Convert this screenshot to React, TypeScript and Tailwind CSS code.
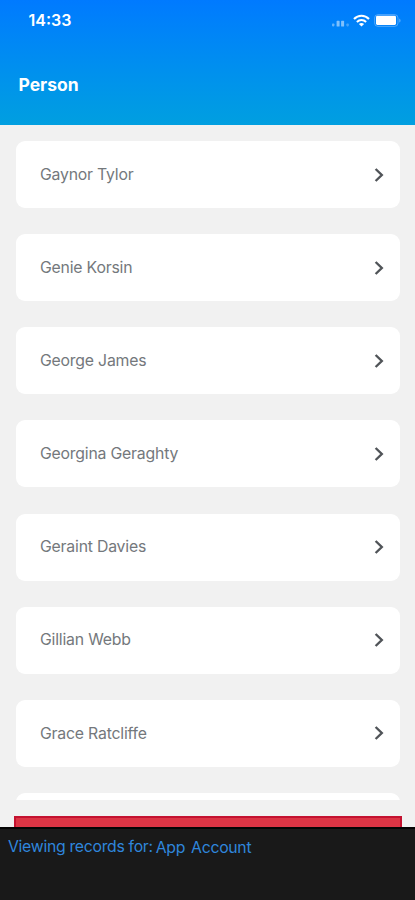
import React from "react";

interface PersonCardProps {
    name: string;
}

const people = [
    "Gaynor Tylor",
    "Genie Korsin",
    "George James",
    "Georgina Geraghty",
    "Geraint Davies",
    "Gillian Webb",
    "Grace Ratcliffe",
];

const StatusIcons: React.FC = () => {
    return (
        <div className="flex items-center">
            <svg className="mt-[5px]" width="18" height="10" viewBox="0 0 18 10" fill="white">
                <rect x="0" y="5.4" width="2.4" height="3" rx="0.8" opacity="0.4" />
                <rect x="4.6" y="2.8" width="3" height="5.8" rx="0.6" opacity="0.5" />
                <rect x="9.1" y="2.8" width="3" height="5.8" rx="0.6" opacity="0.5" />
                <rect x="14.4" y="5.4" width="2.4" height="3" rx="0.8" opacity="0.28" />
            </svg>
            <svg className="ml-[3px]" width="17" height="13" viewBox="0 0 17 13" fill="none" stroke="white" strokeWidth="2.1">
                <path d="M1 4.9C5.2 0.6 11.8 0.6 16 4.9" />
                <path d="M3.9 7.9C6.5 5.3 10.5 5.3 13.1 7.9" />
                <path d="M8.5 12.5L5.9 10C7.3 8.7 9.7 8.7 11.1 10Z" fill="white" stroke="none" />
            </svg>
            <svg className="ml-[4px]" width="28" height="13" viewBox="0 0 28 13">
                <rect x="0.6" y="0.6" width="23.4" height="11.8" rx="3.4" fill="none" stroke="white" strokeOpacity="0.3" />
                <rect x="2" y="1.8" width="20" height="9.2" rx="1.4" fill="white" />
                <path d="M25.3 4.4C26.9 5 26.9 8 25.3 8.6Z" fill="white" opacity="0.4" />
            </svg>
        </div>
    );
};

const PersonCard: React.FC<PersonCardProps> = ({ name }) => {
    return (
        <div className="flex h-[67px] shrink-0 items-center justify-between rounded-[9px] bg-white pl-6 pr-4">
            <span className="text-[15.8px] tracking-[-0.2px] text-[#74787c]">{name}</span>
            <svg width="10" height="14" viewBox="0 0 10 14" fill="none" stroke="#505458" strokeWidth="2.4">
                <path d="M1.6 1L7.8 7L1.6 13" />
            </svg>
        </div>
    );
};

const App: React.FC = () => {
    return (
        <div className="flex h-[900px] w-full flex-col overflow-hidden bg-[#f1f1f1] font-['Inter',sans-serif]">
            <header className="h-[125px] shrink-0 bg-linear-to-b from-[#007aff] to-[#029fe0] text-white">
                <div className="flex h-10 items-center justify-between pl-[28.5px] pr-[13px]">
                    <span className="text-[16px] font-semibold">14:33</span>
                    <StatusIcons />
                </div>
                <h1 className="pl-[18.5px] pt-[31px] text-[17.5px] font-bold leading-7">Person</h1>
            </header>
            <main className="flex h-[675px] shrink-0 flex-col gap-[26.15px] overflow-hidden pl-4 pr-[15px] pt-4">
                {people.map((name) => (
                    <PersonCard key={name} name={name} />
                ))}
                {/* top edge of the next card */}
                <div className="h-[67px] shrink-0 rounded-[9px] bg-white" />
            </main>
            <div className="ml-[14px] mr-[13px] mt-4 h-[11px] shrink-0 border-2 border-b-0 border-[#c41230] bg-[#dc3545]" />
            <footer className="flex flex-1 border-t-2 border-[#050505] bg-[#191919] pl-2 pt-[6px] text-[15.8px] leading-6 tracking-[-0.3px] text-[#2f86dc]">
                <span>Viewing records for:</span>
                <span className="ml-[3px] mt-px">App</span>
                <span className="ml-[6px] mt-px">Account</span>
            </footer>
        </div>
    );
};

export default App;
